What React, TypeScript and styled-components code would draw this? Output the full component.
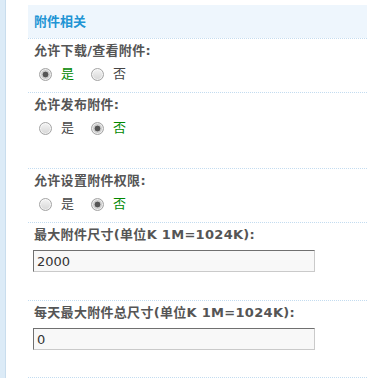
import React from "react";
import styled, { createGlobalStyle } from "styled-components";

const GlobalStyle = createGlobalStyle`
  html, body {
    margin: 0;
    padding: 0;
    background: #fff;
  }
  body {
    font-family: "DejaVu Sans", "Noto Sans CJK SC", sans-serif;
    font-size: 13px;
    color: #444;
  }
`;

const Page = styled.div`
  display: flex;
  min-height: 378px;
`;

const SideStrip = styled.div`
  width: 5px;
  flex: none;
  background: #dcebf7;
  border-right: 1px solid #c9dded;
`;

const Main = styled.div`
  flex: 1;
  padding: 5px 0 0 22px;
`;

const Header = styled.div`
  height: 33px;
  line-height: 33px;
  padding-left: 6px;
  background: #eef6fd;
  color: #2194d4;
  font-weight: bold;
  font-size: 13px;
`;

const Row = styled.div<{ $bottom: number }>`
  border-top: 1px dotted #c3dcf0;
  padding: 2px 0 ${(p) => p.$bottom}px 6px;
`;

const Label = styled.div`
  line-height: 20px;
  height: 20px;
  font-weight: bold;
  color: #555;
  letter-spacing: 0.3px;
  white-space: nowrap;
`;

const RadioGroup = styled.div`
  display: flex;
  align-items: center;
  height: 22px;
  margin-top: 2px;
  padding-left: 5px;
`;

const Option = styled.label<{ $checked: boolean }>`
  display: flex;
  align-items: center;
  gap: 9px;
  margin-right: 17px;
  color: ${(p) => (p.$checked ? "#008800" : "#444")};
  line-height: 22px;
`;

const RadioDot = styled.span<{ $checked: boolean }>`
  width: 11px;
  height: 11px;
  border-radius: 50%;
  border: 1px solid #a4a4a4;
  background: ${(p) =>
    p.$checked
      ? "radial-gradient(circle at 50% 50%, #555 0 2.6px, #c8c8c8 3.2px, #e2e2e2 100%)"
      : "linear-gradient(#f4f4f4, #d6d6d6)"};
  box-shadow: inset 0 0 0 1px rgba(255, 255, 255, 0.6);
`;

const Field = styled.input`
  display: block;
  box-sizing: border-box;
  width: 282px;
  height: 22px;
  margin: 5px 0 0 -1px;
  padding: 0 3px;
  border: 1px solid;
  border-color: #707070 #cacaca #cacaca #707070;
  background: #f8f8f8;
  font-family: "DejaVu Sans", sans-serif;
  font-size: 13px;
  color: #333;
  outline: none;
`;

type Choice = { label: string; value: boolean };

const RadioRow = ({ value }: { value: boolean }) => {
  const choices: Choice[] = [
    { label: "是", value: true },
    { label: "否", value: false },
  ];
  return (
    <RadioGroup>
      {choices.map((c) => (
        <Option key={c.label} $checked={c.value === value}>
          <RadioDot $checked={c.value === value} />
          {c.label}
        </Option>
      ))}
    </RadioGroup>
  );
};

const App = () => {
  return (
    <>
      <GlobalStyle />
      <Page>
        <SideStrip />
        <Main>
          <Header>附件相关</Header>
          <Row $bottom={7}>
            <Label>允许下载/查看附件:</Label>
            <RadioRow value={true} />
          </Row>
          <Row $bottom={29}>
            <Label>允许发布附件:</Label>
            <RadioRow value={false} />
          </Row>
          <Row $bottom={7}>
            <Label>允许设置附件权限:</Label>
            <RadioRow value={false} />
          </Row>
          <Row $bottom={28}>
            <Label>最大附件尺寸(单位K 1M=1024K):</Label>
            <Field defaultValue="2000" />
          </Row>
          <Row $bottom={27}>
            <Label>每天最大附件总尺寸(单位K 1M=1024K):</Label>
            <Field defaultValue="0" />
          </Row>
          <Row $bottom={0} />
        </Main>
      </Page>
    </>
  );
};

export default App;
